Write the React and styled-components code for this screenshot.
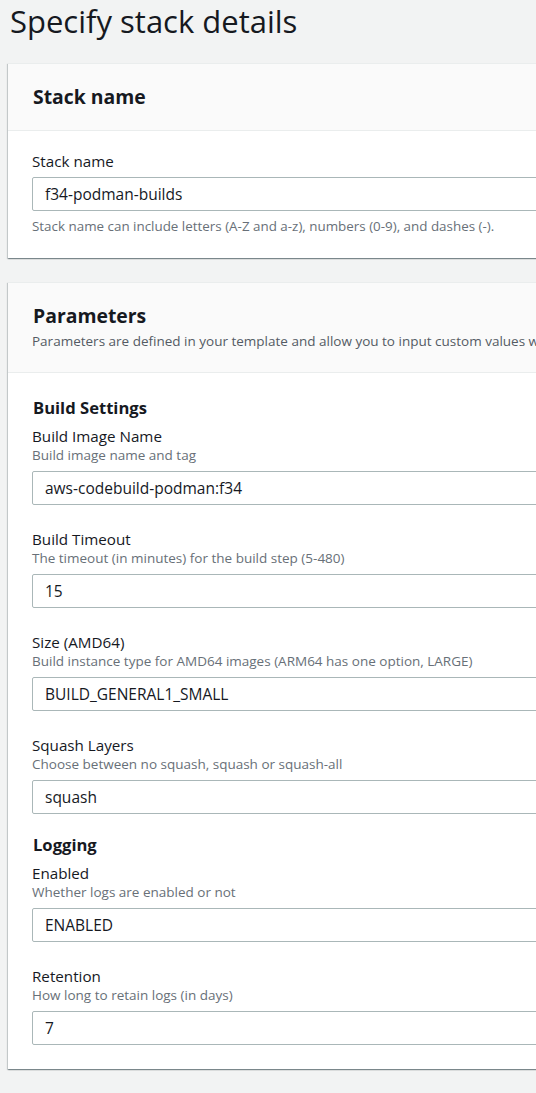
import React from "react";
import styled, { createGlobalStyle } from "styled-components";

const Global = createGlobalStyle`
  html, body { margin: 0; padding: 0; }
  body {
    background: #f2f3f3;
    font-family: "Open Sans", "Noto Sans", sans-serif;
    color: #16191f;
    overflow: hidden;
  }
`;

const Page = styled.div`
  width: 536px;
  height: 1093px;
  overflow: hidden;
  padding-left: 8px;
  box-sizing: border-box;
`;

const Title = styled.h1`
  margin: 0;
  padding: 1px 0 0 2px;
  font-size: 31px;
  font-weight: 400;
  line-height: 40px;
  height: 63px;
  box-sizing: border-box;
  color: #16191f;
`;

const Panel = styled.section`
  width: 640px;
  background: #fff;
  box-shadow: 0 1px 1px 0 rgba(0, 28, 36, 0.3), 1px 1px 1px 0 rgba(0, 28, 36, 0.15),
    -1px 1px 1px 0 rgba(0, 28, 36, 0.15);
  border-top: 1px solid #eaeded;
  margin-bottom: ${(p) => p.$gap || 0}px;
`;

const PanelHeader = styled.header`
  background: #fafafa;
  border-bottom: 1px solid #eaeded;
  padding: ${(p) => (p.$tall ? "19px 24px 22px" : "19px 24px 19px")};
`;

const PanelTitle = styled.h2`
  margin: 0;
  padding-left: 1px;
  font-size: 19.4px;
  font-weight: 700;
  line-height: 28px;
`;

const PanelDesc = styled.p`
  margin: 2px 0 0;
  font-size: 13.5px;
  line-height: 18px;
  color: #545b64;
  white-space: nowrap;
`;

const PanelBody = styled.div`
  padding: ${(p) => p.$pad || "20px 24px 24px"};
  display: flex;
  flex-direction: column;
`;

const Section = styled.h3`
  margin: ${(p) => p.$top || 0}px 0 6px;
  padding-left: 1px;
  font-size: 16.6px;
  font-weight: 700;
  line-height: 24px;
`;

const Field = styled.div`
  display: flex;
  flex-direction: column;
  margin-bottom: ${(p) => p.$gap ?? 24}px;
`;

const Label = styled.label`
  font-size: 15.2px;
  line-height: 20px;
  color: #16191f;
`;

const Hint = styled.div`
  font-size: 13.5px;
  line-height: 18px;
  color: #687078;
  white-space: nowrap;
`;

const Input = styled.div`
  margin-top: ${(p) => p.$top ?? 7}px;
  height: 34px;
  box-sizing: border-box;
  border: 1px solid #aab7b8;
  border-radius: 2px;
  padding: 0 12px;
  font-size: 15.5px;
  line-height: 32px;
  color: #16191f;
  background: #fff;
  white-space: nowrap;
`;

const Constraint = styled.div`
  margin-top: 6px;
  font-size: 13.4px;
  line-height: 18px;
  color: #687078;
  white-space: nowrap;
`;

const params = [
  { section: "Build Settings" },
  { label: "Build Image Name", hint: "Build image name and tag", value: "aws-codebuild-podman:f34" },
  { label: "Build Timeout", hint: "The timeout (in minutes) for the build step (5-480)", value: "15" },
  { label: "Size (AMD64)", hint: "Build instance type for AMD64 images (ARM64 has one option, LARGE)", value: "BUILD_GENERAL1_SMALL" },
  { label: "Squash Layers", hint: "Choose between no squash, squash or squash-all", value: "squash", gap: 19 },
  { section: "Logging" },
  { label: "Enabled", hint: "Whether logs are enabled or not", value: "ENABLED" },
  { label: "Retention", hint: "How long to retain logs (in days)", value: "7", gap: 0 },
];

export default function App() {
  return (
    <>
      <Global />
      <Page>
        <Title>Specify stack details</Title>
        <Panel $gap={24}>
          <PanelHeader>
            <PanelTitle>Stack name</PanelTitle>
          </PanelHeader>
          <PanelBody $pad="20px 24px 23px">
            <Label>Stack name</Label>
            <Input $top={6}>f34-podman-builds</Input>
            <Constraint>Stack name can include letters (A-Z and a-z), numbers (0-9), and dashes (-).</Constraint>
          </PanelBody>
        </Panel>
        <Panel>
          <PanelHeader $tall>
            <PanelTitle>Parameters</PanelTitle>
            <PanelDesc>
              Parameters are defined in your template and allow you to input custom values when you create or update a stack.
            </PanelDesc>
          </PanelHeader>
          <PanelBody $pad="23px 24px 24px">
            {params.map((p, i) =>
              p.section ? (
                <Section key={i}>{p.section}</Section>
              ) : (
                <Field key={i} $gap={p.gap}>
                  <Label>{p.label}</Label>
                  <Hint>{p.hint}</Hint>
                  <Input>{p.value}</Input>
                </Field>
              )
            )}
          </PanelBody>
        </Panel>
      </Page>
    </>
  );
}
